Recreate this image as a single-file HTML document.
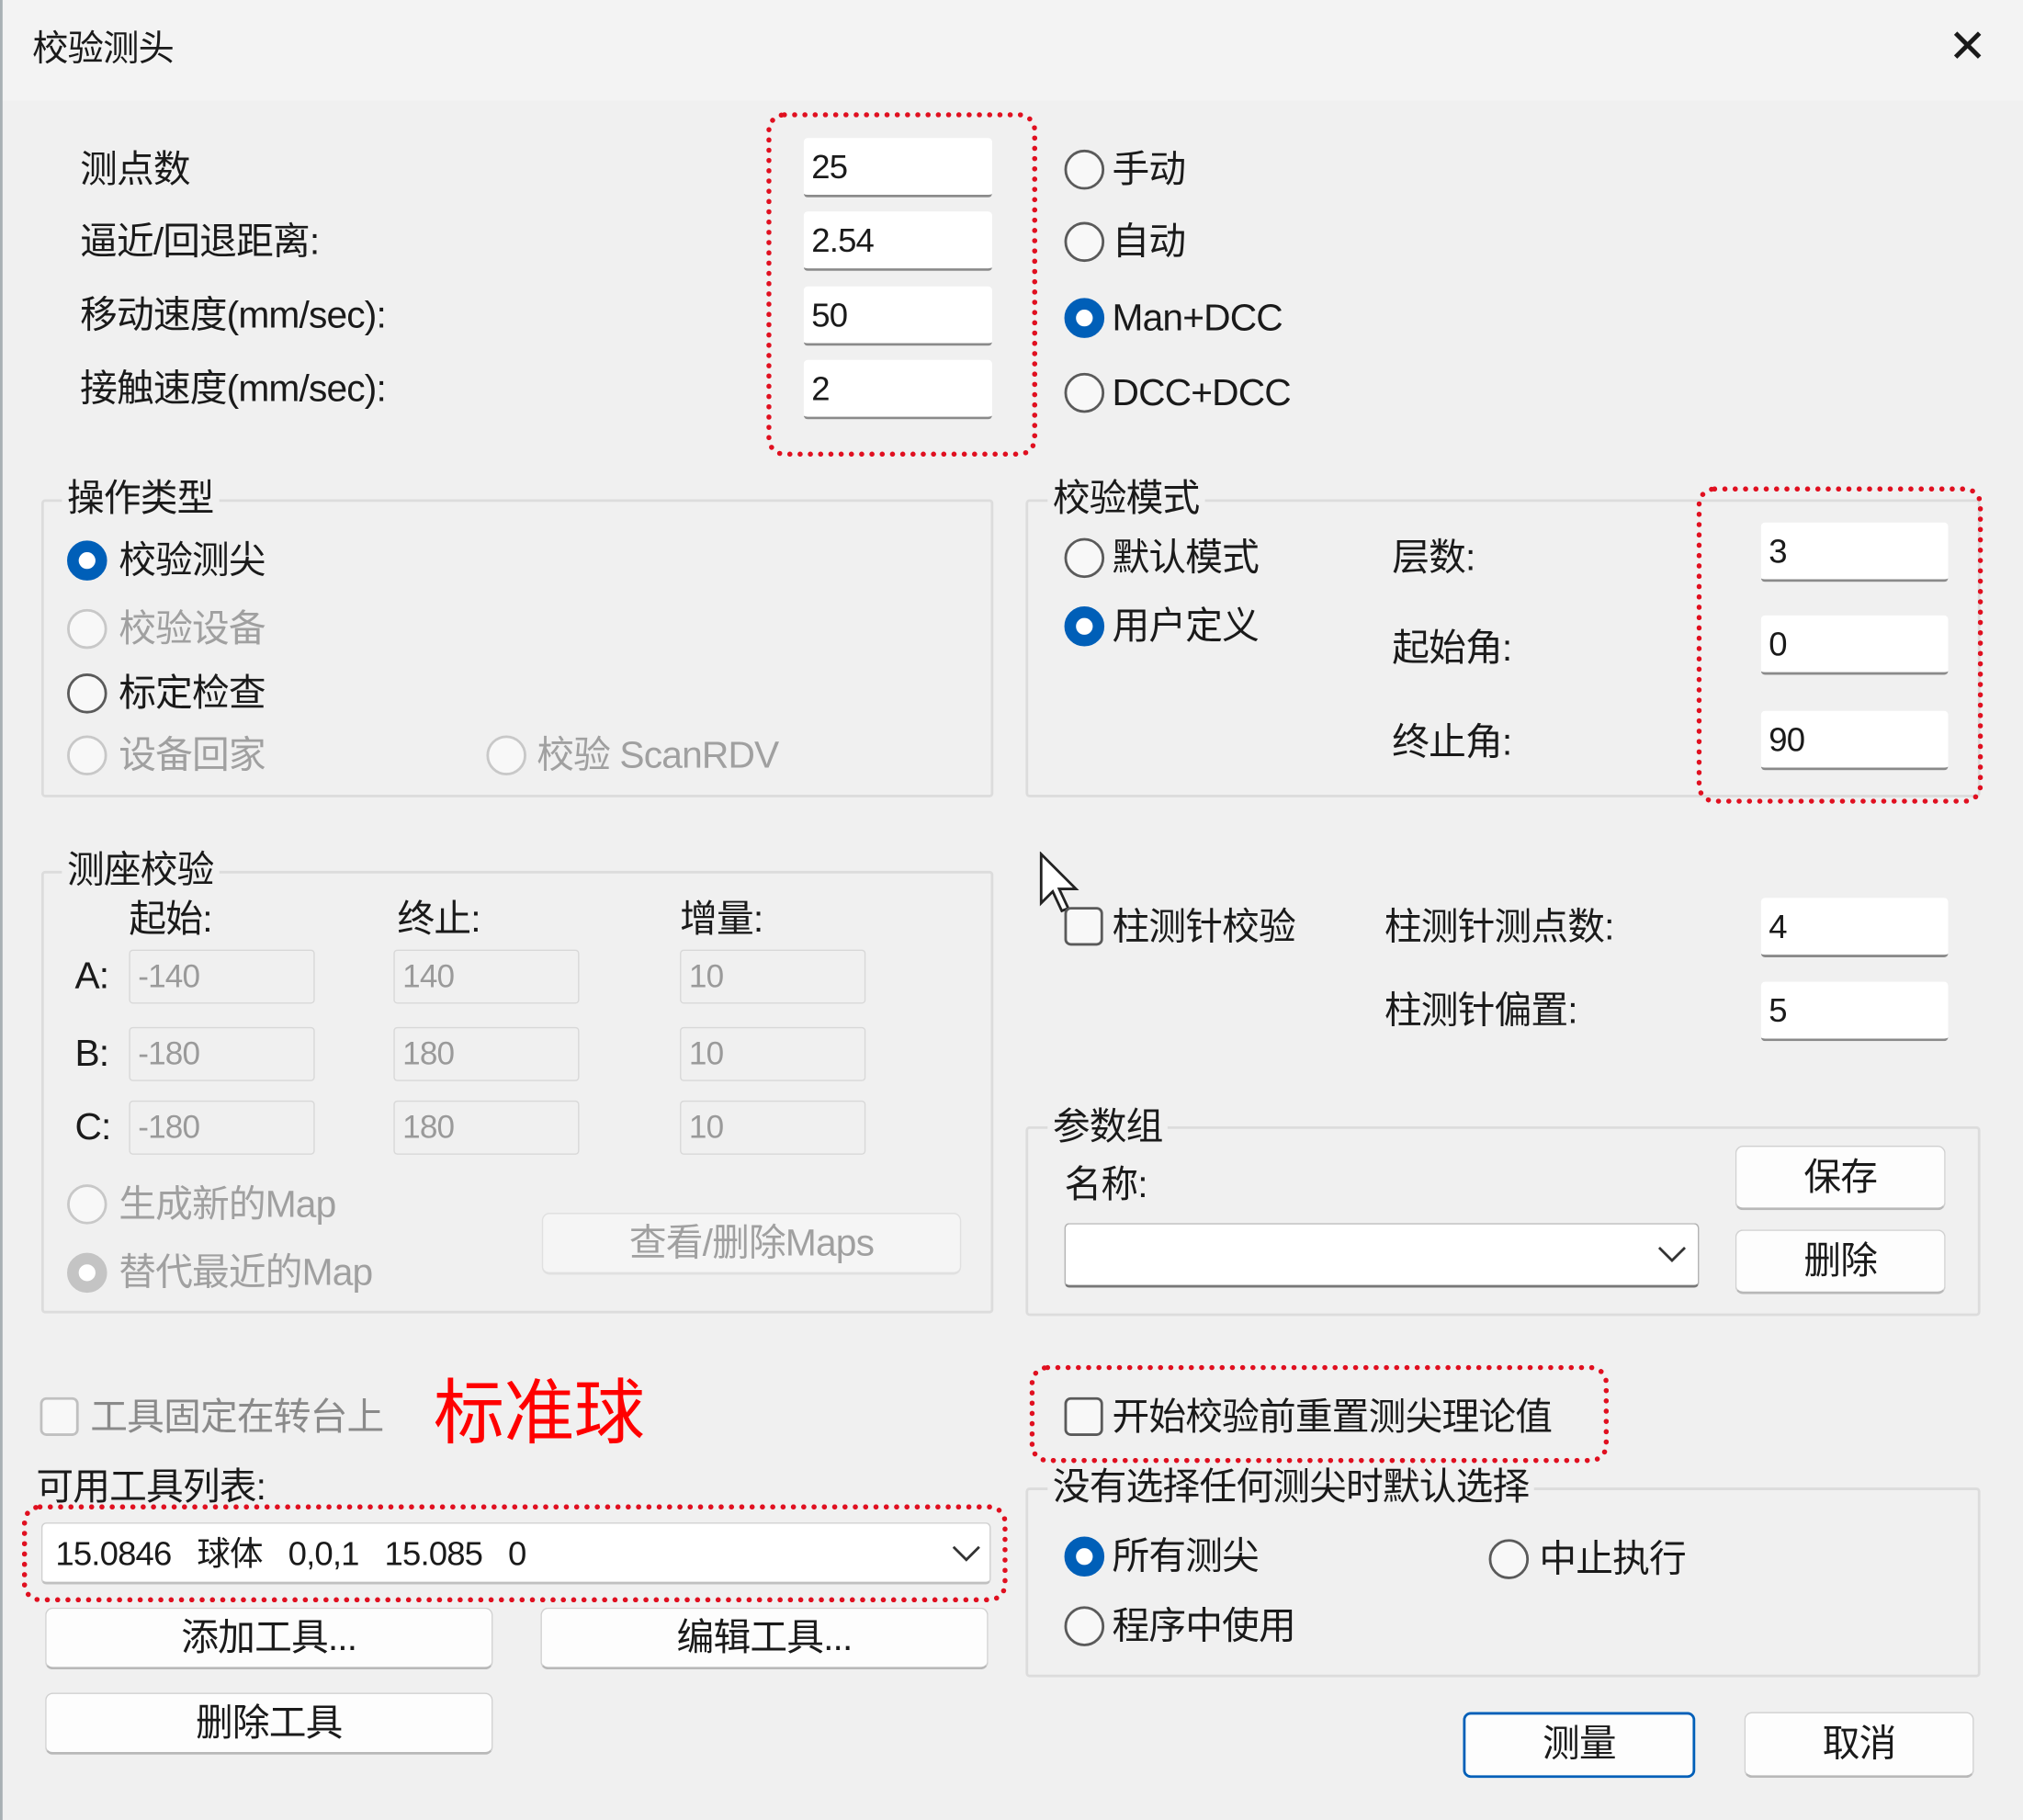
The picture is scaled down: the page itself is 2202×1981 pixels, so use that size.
<!DOCTYPE html>
<html><head><meta charset="utf-8"><style>
html,body{margin:0;padding:0;background:#f0f0f0;}
body{width:2202px;height:1981px;overflow:hidden;}
#s{position:absolute;left:0;top:0;width:1568px;height:1411px;transform:scale(1.4043);transform-origin:0 0;background:#f0f0f0;font-family:"Liberation Sans","Noto Sans CJK SC",sans-serif;color:#1a1a1a;letter-spacing:-0.6px;}
#s div{position:absolute;box-sizing:border-box;}
.t{font-size:29px;line-height:36px;white-space:nowrap;transform:translateY(-18px);}
.g{color:#a0a0a0;}
.in{background:#fff;border-bottom:2px solid #8a8a8a;border-radius:3px;font-size:26px;line-height:44px;padding-left:6px;}
.dis{background:#f0f0f0;border:1px solid #d8d8d8;border-radius:3px;font-size:25px;line-height:40px;padding-left:6px;color:#9a9a9a;}
.r{width:31px;height:31px;border-radius:50%;border:2px solid #5a5a5a;background:#f8f8f8;transform:translate(-15px,-15px);}
.r.on{border:9px solid #005fb8;background:#fff;}
.r.gd{border-color:#c8c8c8;}
.r.gon{border:9px solid #c4c4c4;background:#fff;}
.cb{width:30px;height:30px;border-radius:5px;border:2px solid #5a5a5a;background:#f8f8f8;transform:translate(-15px,-15px);}
.grp{border:2px solid #dcdcdc;border-radius:3px;}
.lg{background:#f0f0f0;padding:0 4px;}
.dash{border:4px dotted #e01020;border-radius:14px;}
.btn{background:#fdfdfd;border:1px solid #d0d0d0;border-bottom:2px solid #b8b8b8;border-radius:6px;font-size:29px;text-align:center;}
</style></head><body><div id="s">
<div style="left:0;top:0;width:1568px;height:78px;background:#f3f3f3"></div>
<div style="left:0;top:0;width:2px;height:1411px;background:#a8b0b4"></div>
<div class="t" style="left:25px;top:38px;font-size:28px">校验测头</div>
<div class="t" style="left:1510px;top:36px;font-size:36px;font-weight:300">✕</div>

<div class="t" style="left:62px;top:132px">测点数</div>
<div class="t" style="left:62px;top:188px">逼近/回退距离:</div>
<div class="t" style="left:62px;top:245px">移动速度(mm/sec):</div>
<div class="t" style="left:62px;top:302px">接触速度(mm/sec):</div>
<div class="in" style="left:623px;top:107px;width:146px;height:46px">25</div>
<div class="in" style="left:623px;top:164px;width:146px;height:46px">2.54</div>
<div class="in" style="left:623px;top:222px;width:146px;height:46px">50</div>
<div class="in" style="left:623px;top:279px;width:146px;height:46px">2</div>
<div class="dash" style="left:594px;top:87px;width:210px;height:267px"></div>
<div class="r" style="left:840px;top:131px"></div><div class="t" style="left:862px;top:132px">手动</div>
<div class="r" style="left:840px;top:187px"></div><div class="t" style="left:862px;top:188px">自动</div>
<div class="r on" style="left:840px;top:246px"></div><div class="t" style="left:862px;top:247px">Man+DCC</div>
<div class="r" style="left:840px;top:304px"></div><div class="t" style="left:862px;top:305px">DCC+DCC</div>

<div class="grp" style="left:32px;top:387px;width:738px;height:231px"></div>
<div class="t lg" style="left:48px;top:387px">操作类型</div>
<div class="r on" style="left:67px;top:434px"></div><div class="t" style="left:92px;top:435px">校验测尖</div>
<div class="r gd" style="left:67px;top:487px"></div><div class="t g" style="left:92px;top:488px">校验设备</div>
<div class="r" style="left:67px;top:537px"></div><div class="t" style="left:92px;top:538px">标定检查</div>
<div class="r gd" style="left:67px;top:585px"></div><div class="t g" style="left:92px;top:586px">设备回家</div>
<div class="r gd" style="left:392px;top:585px"></div><div class="t g" style="left:416px;top:586px">校验 ScanRDV</div>

<div class="grp" style="left:795px;top:387px;width:740px;height:231px"></div>
<div class="t lg" style="left:812px;top:387px">校验模式</div>
<div class="r" style="left:840px;top:432px"></div><div class="t" style="left:862px;top:433px">默认模式</div>
<div class="r on" style="left:840px;top:485px"></div><div class="t" style="left:862px;top:486px">用户定义</div>
<div class="t" style="left:1079px;top:433px">层数:</div>
<div class="t" style="left:1079px;top:503px">起始角:</div>
<div class="t" style="left:1079px;top:576px">终止角:</div>
<div class="in" style="left:1365px;top:405px;width:145px;height:46px">3</div>
<div class="in" style="left:1365px;top:477px;width:145px;height:46px">0</div>
<div class="in" style="left:1365px;top:551px;width:145px;height:46px">90</div>
<div class="dash" style="left:1315px;top:377px;width:222px;height:246px"></div>

<div class="grp" style="left:32px;top:675px;width:738px;height:343px"></div>
<div class="t lg" style="left:48px;top:675px">测座校验</div>
<div class="t" style="left:100px;top:713px">起始:</div>
<div class="t" style="left:308px;top:713px">终止:</div>
<div class="t" style="left:527px;top:713px">增量:</div>
<div class="t" style="left:58px;top:757px">A:</div>
<div class="t" style="left:58px;top:817px">B:</div>
<div class="t" style="left:58px;top:874px">C:</div>
<div class="dis" style="left:100px;top:736px;width:144px;height:42px">-140</div>
<div class="dis" style="left:305px;top:736px;width:144px;height:42px">140</div>
<div class="dis" style="left:527px;top:736px;width:144px;height:42px">10</div>
<div class="dis" style="left:100px;top:796px;width:144px;height:42px">-180</div>
<div class="dis" style="left:305px;top:796px;width:144px;height:42px">180</div>
<div class="dis" style="left:527px;top:796px;width:144px;height:42px">10</div>
<div class="dis" style="left:100px;top:853px;width:144px;height:42px">-180</div>
<div class="dis" style="left:305px;top:853px;width:144px;height:42px">180</div>
<div class="dis" style="left:527px;top:853px;width:144px;height:42px">10</div>
<div class="r gd" style="left:67px;top:933px"></div><div class="t g" style="left:92px;top:934px">生成新的Map</div>
<div class="r gon" style="left:67px;top:986px"></div><div class="t g" style="left:92px;top:987px">替代最近的Map</div>
<div class="btn g" style="left:420px;top:940px;width:325px;height:48px;line-height:46px;border-color:#e0e0e0;background:#f5f5f5">查看/删除Maps</div>

<svg style="position:absolute;left:805px;top:660px" width="34" height="50" viewBox="0 0 34 50"><path d="M2 2 L2 40 L11 31 L18 46 L23 44 L16 29 L29 29 Z" fill="#fff" stroke="#222" stroke-width="2"/></svg>
<div class="cb" style="left:840px;top:718px"></div><div class="t" style="left:862px;top:719px">柱测针校验</div>
<div class="t" style="left:1073px;top:719px">柱测针测点数:</div>
<div class="t" style="left:1073px;top:784px">柱测针偏置:</div>
<div class="in" style="left:1365px;top:696px;width:145px;height:46px">4</div>
<div class="in" style="left:1365px;top:761px;width:145px;height:46px">5</div>

<div class="grp" style="left:795px;top:873px;width:740px;height:147px"></div>
<div class="t lg" style="left:812px;top:874px">参数组</div>
<div class="t" style="left:825px;top:919px">名称:</div>
<div style="left:825px;top:948px;width:492px;height:50px;background:#fff;border:1px solid #b0b0b0;border-bottom:2px solid #777;border-radius:4px"></div>
<svg style="position:absolute;left:1284px;top:964px" width="24" height="16"><path d="M2 3 L12 13 L22 3" fill="none" stroke="#333" stroke-width="2"/></svg>
<div class="btn" style="left:1345px;top:888px;width:163px;height:50px;line-height:48px">保存</div>
<div class="btn" style="left:1345px;top:953px;width:163px;height:50px;line-height:48px">删除</div>

<div class="cb" style="left:46px;top:1098px;border-color:#c0c0c0"></div><div class="t g" style="left:70px;top:1099px;color:#8a8a8a">工具固定在转台上</div>
<div class="t" style="left:336px;top:1095px;font-size:55px;line-height:60px;transform:translateY(-30px);color:#ff0000">标准球</div>
<div class="cb" style="left:840px;top:1098px"></div><div class="t" style="left:862px;top:1099px">开始校验前重置测尖理论值</div>
<div class="dash" style="left:798px;top:1058px;width:449px;height:76px"></div>

<div class="grp" style="left:795px;top:1153px;width:740px;height:147px"></div>
<div class="t lg" style="left:812px;top:1153px">没有选择任何测尖时默认选择</div>
<div class="r on" style="left:840px;top:1206px"></div><div class="t" style="left:862px;top:1207px">所有测尖</div>
<div class="r" style="left:1169px;top:1208px"></div><div class="t" style="left:1193px;top:1209px">中止执行</div>
<div class="r" style="left:840px;top:1260px"></div><div class="t" style="left:862px;top:1261px">程序中使用</div>

<div class="t" style="left:28px;top:1153px">可用工具列表:</div>
<div style="left:32px;top:1180px;width:736px;height:48px;background:#fff;border:1px solid #d0d0d0;border-bottom:2px solid #c0c0c0;border-radius:4px;font-size:26px;line-height:46px;padding-left:10px;white-space:pre">15.0846   球体   0,0,1   15.085   0</div>
<svg style="position:absolute;left:737px;top:1196px" width="24" height="16"><path d="M2 3 L12 13 L22 3" fill="none" stroke="#333" stroke-width="2"/></svg>
<div class="dash" style="left:17px;top:1166px;width:764px;height:76px"></div>
<div class="btn" style="left:35px;top:1246px;width:347px;height:48px;line-height:46px">添加工具...</div>
<div class="btn" style="left:419px;top:1246px;width:347px;height:48px;line-height:46px">编辑工具...</div>
<div class="btn" style="left:35px;top:1312px;width:347px;height:48px;line-height:46px">删除工具</div>

<div class="btn" style="left:1134px;top:1327px;width:180px;height:51px;line-height:47px;border:2px solid #005fb8">测量</div>
<div class="btn" style="left:1352px;top:1327px;width:178px;height:51px;line-height:49px">取消</div>
</div></body></html>
